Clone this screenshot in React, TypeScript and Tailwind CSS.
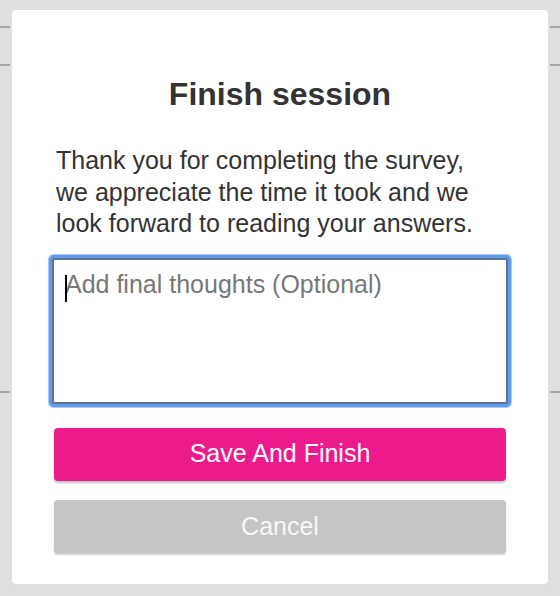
import { useState } from 'react'

const font = 'font-["Liberation_Sans",Arial,Helvetica,sans-serif]'

function FinishSessionModal() {
  const [thoughts, setThoughts] = useState('')

  return (
    <div
      className={`w-full rounded-[4px] bg-white px-[42px] pt-[64px] pb-[31px] shadow-[0_0_0_2px_#dfdfdf] ${font}`}
    >
      <h1 className="text-center text-[32px] leading-[40px] font-bold text-[#333]">Finish session</h1>

      <p className="mt-[31px] pl-[2px] text-[25px] leading-[31.5px] text-[#333]">
        Thank you for completing the survey,
        <br />
        we appreciate the time it took and we
        <br />
        look forward to reading your answers.
      </p>

      <div className="relative mt-[18px] -mx-[2px]">
        <textarea
          value={thoughts}
          onChange={(e) => setThoughts(e.target.value)}
          placeholder="Add final thoughts (Optional)"
          className="block h-[146px] w-full resize-none rounded-[2px] border-2 border-[#5f7391] bg-white px-[11px] pt-[9px] text-[25px] leading-[30px] text-[#333] outline-none shadow-[0_0_0_3px_#5f9cef,0_0_0_4px_#a9cbf6] placeholder:text-[#777]"
        />
        {thoughts === '' && (
          <span className="pointer-events-none absolute top-[17px] left-[13px] h-[27px] w-[2px] bg-black" />
        )}
      </div>

      <button
        type="button"
        className="mt-[24px] flex h-[53px] w-full items-center justify-center rounded-[4px] bg-[#ec1a8c] text-[25px] text-white shadow-[0_2px_2px_rgba(0,0,0,0.25)]"
      >
        Save And Finish
      </button>

      <button
        type="button"
        className="mt-[19.5px] flex h-[53px] w-full items-center justify-center rounded-[4px] bg-[#c5c5c5] text-[25px] text-[#f7f7f7] shadow-[0_2px_2px_rgba(0,0,0,0.2)]"
      >
        Cancel
      </button>
    </div>
  )
}

export default function App() {
  return (
    <div className="relative h-[596px] w-[560px] overflow-hidden bg-[#dfdfdf]">
      {/* page underneath the modal */}
      <div className="pt-[26px]">
        <div className="h-[38px] border-t-2 border-[#a6a6a6]" />
        <div className="h-[327px] border-t-2 border-[#a6a6a6]" />
        <div className="h-[38px] border-t-2 border-[#a6a6a6]" />
      </div>

      <div className="absolute inset-0 px-[12px] pt-[10px]">
        <FinishSessionModal />
      </div>
    </div>
  )
}
